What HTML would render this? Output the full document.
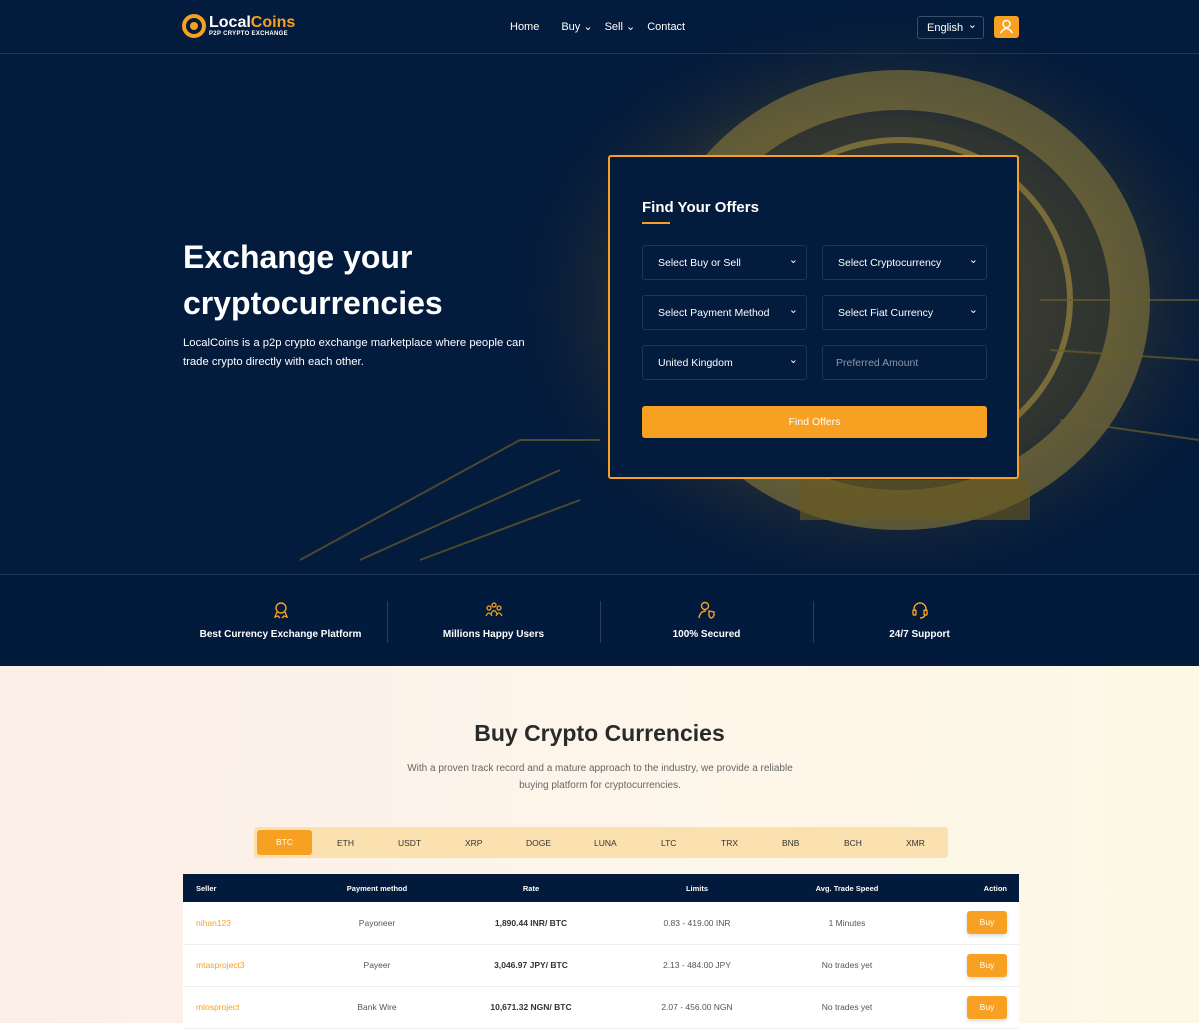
<!DOCTYPE html>
<html><head><meta charset="utf-8"><style>
*{box-sizing:border-box;margin:0;padding:0}
body{width:1199px;height:1023px;overflow:hidden;font-family:"Liberation Sans",sans-serif;background:#fff}
.top{position:absolute;left:0;top:0;width:1199px;height:666px;background:#031b3c;overflow:hidden}
nav{position:absolute;top:0;left:0;width:1199px;height:54px;border-bottom:1px solid #1f3556;z-index:3}
.logo{position:absolute;left:182px;top:14px;display:flex;align-items:center}
.logo .c{width:24px;height:24px;border-radius:50%;border:4px solid #f7a021;position:relative}
.logo .c:after{content:"";position:absolute;left:4px;top:4px;width:8px;height:8px;border-radius:50%;background:#f7a021}
.logo .t{margin-left:3px;line-height:1}
.logo .t b{font-size:16px;color:#fff}.logo .t b span{color:#f7a021}
.logo .t small{display:block;font-size:6px;color:#fff;font-weight:bold;letter-spacing:.3px}
.menu{position:absolute;top:20px;left:510px;font-size:11px;color:#fff}
.menu span{margin-right:18px}
.lang{position:absolute;left:917px;top:16px;width:67px;height:23px;border:1px solid #3a4d69;border-radius:3px;color:#fff;font-size:11px;padding:5px 9px}
.lang:after{content:"⌄";position:absolute;right:6px;top:1px}
.user{position:absolute;left:994px;top:16px;width:25px;height:22px;background:#f7a021;border-radius:3px}
h1{position:absolute;left:183px;top:234px;color:#fff;font-size:32px;line-height:46px;font-weight:bold;z-index:2}
.lead{position:absolute;left:183px;top:334px;width:350px;color:#fff;font-size:11.3px;line-height:19px;z-index:2}
.card{position:absolute;left:608px;top:155px;width:411px;height:324px;border:2px solid #f7a021;border-radius:3px;background:#031b3c;z-index:2}
.card h2{position:absolute;left:32px;top:42px;color:#fff;font-size:15px}
.card .u{position:absolute;left:32px;top:65px;width:28px;height:2px;background:#f7a021}
.f{position:absolute;width:165px;height:35px;border:1px solid #1f3556;border-radius:3px;color:#fff;font-size:10.5px;padding:11px 15px}
.f.s:after{content:"⌄";position:absolute;right:8px;top:7px;font-size:11px}
.btn{position:absolute;left:32px;top:249px;width:345px;height:32px;background:#f7a021;border-radius:3px;color:#fff;font-size:10.5px;text-align:center;line-height:32px}
.feat{position:absolute;top:574px;left:0;width:1199px;height:92px;background:#021a3b;border-top:1px solid #1f3556;z-index:2}
.fi{position:absolute;top:26px;width:213px;text-align:center;color:#fff;font-size:10px;font-weight:bold}
.fi svg{display:block;margin:0 auto 10px}
.sep{position:absolute;top:26px;width:1px;height:42px;background:#2a3f5e}
.low{position:absolute;top:666px;left:0;width:1199px;height:357px;background:linear-gradient(90deg,#fbeee8,#fdf5ea 50%,#fdf8e6)}
.low h3{position:absolute;top:54px;width:100%;text-align:center;font-size:23px;color:#2a2a2a}
.low p{position:absolute;top:94px;left:400px;width:400px;text-align:center;font-size:10px;line-height:17px;color:#666}
.tabs{position:absolute;left:254px;top:161px;width:694px;height:31px;background:#fbe0b0;border-radius:3px;font-size:8.5px;color:#333}
.tabs span{position:absolute;top:11px}
.tabs .a{left:3px;top:3px;width:55px;height:25px;background:#f7a021;color:#fff;border-radius:3px;text-align:center;line-height:25px}
table{position:absolute;left:183px;top:208px;width:836px;border-collapse:collapse;font-size:8.5px;background:#fff;table-layout:fixed}
th{background:#021a3b;color:#fff;height:28px;font-size:7.5px;text-align:center}
td{height:42px;text-align:center;color:#555;border-bottom:1px solid #eee}
th:first-child,td:first-child{text-align:left;padding-left:13px}
th:last-child,td:last-child{text-align:right;padding-right:12px}
td:first-child{color:#f7a021}
td b{color:#333}
.buy{display:inline-block;width:40px;height:23px;line-height:23px;text-align:center;background:#f7a021;color:#fff;border-radius:3px;box-shadow:0 2px 4px rgba(0,0,0,.15)}
</style></head><body>
<div class="top">
<svg width="1199" height="666" style="position:absolute;left:0;top:0">
<defs><radialGradient id="g" cx="0.5" cy="0.5" r="0.5"><stop offset="0" stop-color="#5a5030"/><stop offset="0.6" stop-color="#3a3a2e"/><stop offset="1" stop-color="#031b3c" stop-opacity="0"/></radialGradient></defs>
<ellipse cx="880" cy="300" rx="380" ry="300" fill="url(#g)" opacity=".8"/>
<ellipse cx="900" cy="300" rx="230" ry="210" fill="none" stroke="#8a7a3a" stroke-width="40" opacity=".6"/>
<ellipse cx="900" cy="300" rx="170" ry="160" fill="none" stroke="#a89040" stroke-width="6" opacity=".6"/>
<rect x="800" y="480" width="230" height="40" fill="#6a5a20" opacity=".6"/>
<path d="M300 560 L520 440 L600 440 M360 560 L560 470 M420 560 L580 500 M1040 300 L1199 300 M1050 350 L1199 360 M1060 420 L1199 440" stroke="#6b5d2a" stroke-width="2" fill="none" opacity=".7"/>
</svg>
<nav>
<div class="logo"><div class="c"></div><div class="t"><b>Local<span>Coins</span></b><small>P2P CRYPTO EXCHANGE</small></div></div>
<div class="menu"><span>Home</span><span style="margin-left:4px">Buy ⌄</span><span style="margin-left:-6px">Sell ⌄</span><span style="margin-left:-6px">Contact</span></div>
<div class="lang">English</div><div class="user"><svg width="25" height="22"><circle cx="12.5" cy="8" r="3.5" fill="none" stroke="#fff" stroke-width="1.5"/><path d="M6.5 17 Q12.5 8 18.5 17" fill="none" stroke="#fff" stroke-width="1.5"/></svg></div>
</nav>
<h1>Exchange your<br>cryptocurrencies</h1>
<div class="lead">LocalCoins is a p2p crypto exchange marketplace where people can trade crypto directly with each other.</div>
<div class="card"><h2>Find Your Offers</h2><div class="u"></div>
<div class="f s" style="left:32px;top:88px">Select Buy or Sell</div>
<div class="f s" style="left:212px;top:88px">Select Cryptocurrency</div>
<div class="f s" style="left:32px;top:138px">Select Payment Method</div>
<div class="f s" style="left:212px;top:138px">Select Fiat Currency</div>
<div class="f s" style="left:32px;top:188px">United Kingdom</div>
<div class="f" style="left:212px;top:188px;color:#8d97a8;padding-left:13px">Preferred Amount</div>
<div class="btn">Find Offers</div></div>
<div class="feat">
<div class="fi" style="left:174px"><svg width="18" height="18" fill="none" stroke="#f7a021" stroke-width="1.4"><circle cx="9" cy="7" r="5"/><path d="M5 11 L3 16 L6 15 L8 17 M13 11 L15 16 L12 15 L10 17"/></svg>Best Currency Exchange Platform</div><div class="sep" style="left:387px"></div>
<div class="fi" style="left:387px"><svg width="20" height="18" fill="none" stroke="#f7a021" stroke-width="1.3"><circle cx="10" cy="4" r="2"/><circle cx="5" cy="7" r="2"/><circle cx="15" cy="7" r="2"/><path d="M2 15 Q5 9 8 15 M7 13 Q10 6 13 13 M12 15 Q15 9 18 15"/></svg>Millions Happy Users</div><div class="sep" style="left:600px"></div>
<div class="fi" style="left:600px"><svg width="18" height="18" fill="none" stroke="#f7a021" stroke-width="1.4"><circle cx="7" cy="5" r="3.5"/><path d="M1 17 Q2 10 8 10 M11 10 L16 11 L16 14 Q15 17 13 17 Q11 16 11 14 Z"/></svg>100% Secured</div><div class="sep" style="left:813px"></div>
<div class="fi" style="left:813px"><svg width="18" height="18" fill="none" stroke="#f7a021" stroke-width="1.4"><path d="M3 10 V8 A6 6 0 0 1 15 8 V10"/><rect x="2" y="9" width="3" height="5" rx="1"/><rect x="13" y="9" width="3" height="5" rx="1"/><path d="M14 14 Q13 17 9 17"/></svg>24/7 Support</div>
</div>
</div>
<div class="low">
<h3>Buy Crypto Currencies</h3>
<p>With a proven track record and a mature approach to the industry, we provide a reliable buying platform for cryptocurrencies.</p>
<div class="tabs"><span class="a">BTC</span><span style="left:83px">ETH</span><span style="left:144px">USDT</span><span style="left:211px">XRP</span><span style="left:272px">DOGE</span><span style="left:340px">LUNA</span><span style="left:407px">LTC</span><span style="left:467px">TRX</span><span style="left:528px">BNB</span><span style="left:590px">BCH</span><span style="left:652px">XMR</span></div>
<table>
<colgroup><col style="width:120px"><col style="width:148px"><col style="width:160px"><col style="width:172px"><col style="width:128px"><col style="width:108px"></colgroup>
<tr><th>Seller</th><th>Payment method</th><th>Rate</th><th>Limits</th><th>Avg. Trade Speed</th><th>Action</th></tr>
<tr><td>nihan123</td><td>Payoneer</td><td><b>1,890.44 INR/ BTC</b></td><td>0.83 - 419.00 INR</td><td>1 Minutes</td><td><span class="buy">Buy</span></td></tr>
<tr><td>mtasproject3</td><td>Payeer</td><td><b>3,046.97 JPY/ BTC</b></td><td>2.13 - 484.00 JPY</td><td>No trades yet</td><td><span class="buy">Buy</span></td></tr>
<tr><td>mlosproject</td><td>Bank Wire</td><td><b>10,671.32 NGN/ BTC</b></td><td>2.07 - 456.00 NGN</td><td>No trades yet</td><td><span class="buy">Buy</span></td></tr>
</table>
</div>
</body></html>
